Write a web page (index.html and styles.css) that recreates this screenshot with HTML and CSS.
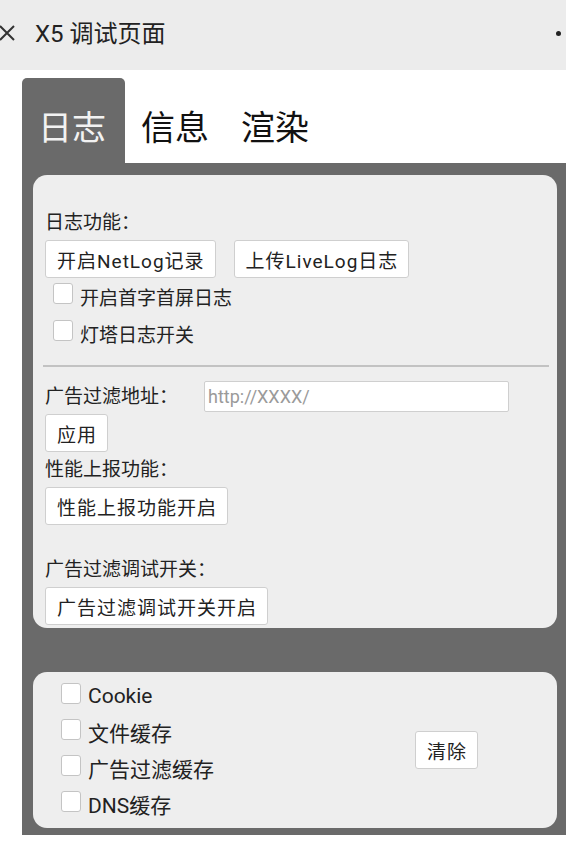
FILE: index.html
```html
<!DOCTYPE html>
<html lang="zh-CN">
<head>
  <meta charset="UTF-8">
  <title>X5 调试页面</title>
  <link rel="stylesheet" href="styles.css">
</head>
<body>
  <div id="title-bar">
    <svg class="close-icon" width="18" height="18" viewBox="0 0 18 18">
      <path d="M2 2 L16 16 M16 2 L2 16" stroke="#333" stroke-width="2" fill="none"/>
    </svg>
    <span class="title">X5 调试页面</span>
    <span class="more-dot"></span>
  </div>

  <div id="main">
    <div id="tabs">
      <div class="tab active">日志</div>
      <div class="tab">信息</div>
      <div class="tab">渲染</div>
    </div>

    <div id="panel">
      <div class="card">
        <div class="label">日志功能：</div>
        <div class="btn-row">
          <button class="btn">开启NetLog记录</button>
          <button class="btn">上传LiveLog日志</button>
        </div>
        <label class="check"><input type="checkbox">开启首字首屏日志</label>
        <label class="check"><input type="checkbox">灯塔日志开关</label>
        <hr>
        <div class="label inline">广告过滤地址：<input class="url-input" type="text" placeholder="http://XXXX/"></div>
        <button class="btn">应用</button>
        <div class="label after-apply">性能上报功能：</div>
        <button class="btn">性能上报功能开启</button>
        <div class="label spaced">广告过滤调试开关：</div>
        <button class="btn">广告过滤调试开关开启</button>
      </div>

      <div class="card cache-card">
        <div class="cache-list">
          <label class="check"><input type="checkbox">Cookie</label>
          <label class="check"><input type="checkbox">文件缓存</label>
          <label class="check"><input type="checkbox">广告过滤缓存</label>
          <label class="check"><input type="checkbox">DNS缓存</label>
        </div>
        <button class="btn">清除</button>
      </div>
    </div>
  </div>
</body>
</html>
```

FILE: styles.css
```css
body {
  margin: 0;
  background-color: #ffffff;
  font-family: Roboto, "Noto Sans CJK SC", sans-serif;
  color: #222;
  overflow: hidden;
}

#title-bar {
  height: 70px;
  background-color: #ececec;
  display: flex;
  align-items: center;
  position: relative;
}

.close-icon {
  margin-left: -2px;
  margin-top: -4px;
}

.title {
  font-size: 24px;
  margin-left: 19px;
  margin-top: -7px;
  color: #222;
}

.more-dot {
  position: absolute;
  right: 5px;
  top: 31px;
  width: 5px;
  height: 5px;
  border-radius: 50%;
  background-color: #222;
}

#main {
  padding: 8px 0 7px 22px;
}

#tabs {
  display: flex;
  height: 85px;
}

.tab {
  padding: 0 16px;
  font-size: 34px;
  line-height: 100px;
  height: 85px;
  color: #111;
  overflow: hidden;
}

.tab.active {
  padding: 0 19px 0 16px;
  background-color: #6a6a6a;
  color: #f2f2f2;
  border-radius: 5px 5px 0 0;
}

#panel {
  background-color: #6a6a6a;
  padding: 12px 9px 7px 11px;
  display: flex;
  flex-direction: column;
  gap: 44px;
}

.card {
  background-color: #eeeeee;
  border-radius: 14px;
  padding: 36px 12px 3px 12px;
}

.label {
  font-size: 19px;
  line-height: 24px;
  color: #222;
}

.label.inline {
  display: flex;
  align-items: center;
  margin-top: 14px;
}

.label.after-apply {
  margin-top: 6px;
}

.label.spaced {
  margin-top: 33px;
}

.btn-row {
  display: flex;
  gap: 18px;
}

.btn {
  display: block;
  margin-top: 5px;
  height: 38px;
  padding: 0 10px 0 11px;
  font-family: Roboto, "Noto Sans CJK SC", sans-serif;
  font-size: 19px;
  letter-spacing: 1px;
  color: #222;
  background-color: #ffffff;
  border: 1px solid #cfcfcf;
  border-radius: 3px;
}

.check {
  display: flex;
  align-items: center;
  font-size: 19px;
  height: 37px;
  margin-left: 8px;
  color: #222;
}

.check input {
  appearance: none;
  width: 20px;
  height: 21px;
  margin: 0 7px 0 0;
  background-color: #ffffff;
  border: 1px solid #c4c4c4;
  border-radius: 3px;
  position: relative;
  top: -3px;
}

hr {
  border: none;
  border-top: 2px solid #c2c2c2;
  margin: 13px -4px 0 -2px;
}

.url-input {
  margin-left: 26px;
  width: 305px;
  height: 31px;
  box-sizing: border-box;
  padding: 0 3px;
  font-family: Roboto, sans-serif;
  font-size: 18px;
  border: 1px solid #cfcfcf;
  border-radius: 2px;
  background-color: #ffffff;
}

.url-input::placeholder {
  color: #9a9a9a;
}

.label.inline + .btn {
  margin-top: 2px;
}

.cache-card {
  padding: 6px 12px 6px 20px;
  display: flex;
  align-items: center;
}

.cache-list {
  width: 362px;
}

.cache-card .check {
  height: 36px;
  font-size: 21px;
}

.cache-card .btn {
  margin-top: 0;
}
```
